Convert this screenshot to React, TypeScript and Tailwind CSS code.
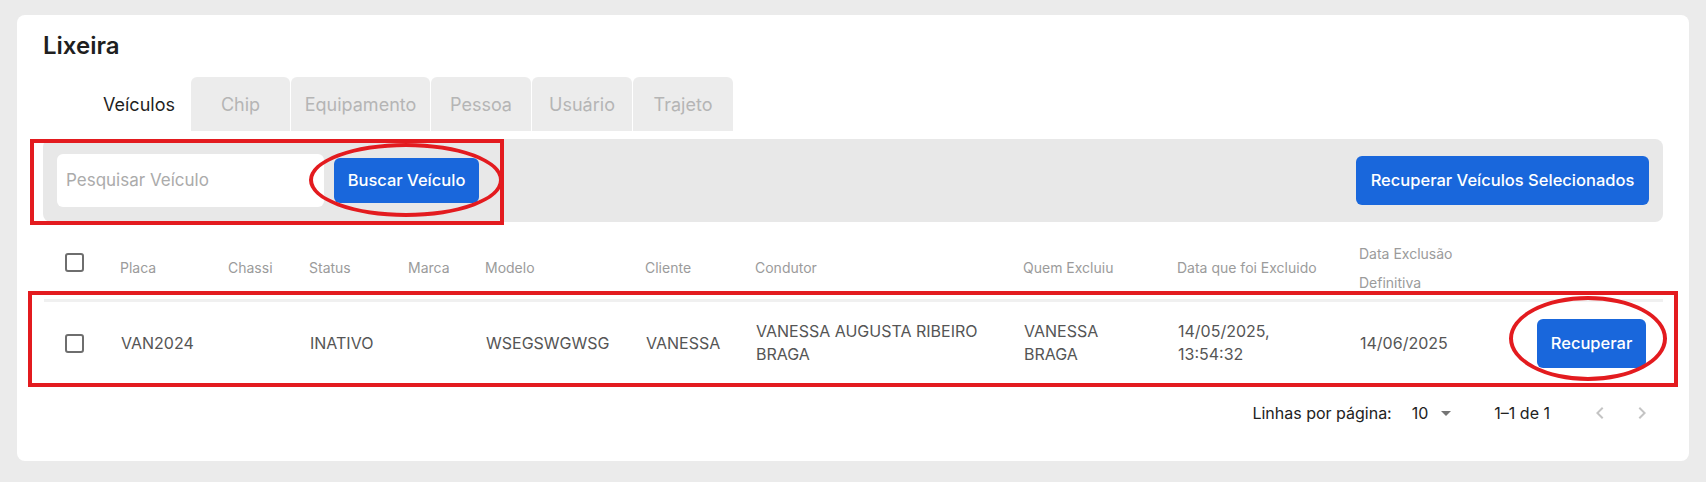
import type { ReactNode } from "react";

const cols =
  "grid grid-cols-[77px_108px_81px_99px_77px_160px_110px_268px_154px_182px_177px_129px]";

const tabs = [
  { label: "Veículos", w: "w-[102px]", active: true },
  { label: "Chip", w: "w-[99px]", active: false },
  { label: "Equipamento", w: "w-[139px]", active: false },
  { label: "Pessoa", w: "w-[100px]", active: false },
  { label: "Usuário", w: "w-[100px]", active: false },
  { label: "Trajeto", w: "w-[100px]", active: false },
];

// largura máxima do texto de cada coluna (para quebrar como na tela original)
const widths = [
  "w-[80px]",
  "w-[60px]",
  "w-[80px]",
  "w-[60px]",
  "w-[130px]",
  "w-[80px]",
  "w-[235px]",
  "w-[100px]",
  "w-[160px]",
  "w-[130px]",
];

const headers = [
  "Placa",
  "Chassi",
  "Status",
  "Marca",
  "Modelo",
  "Cliente",
  "Condutor",
  "Quem Excluiu",
  "Data que foi Excluido",
  "Data Exclusão Definitiva",
];

const row = [
  "VAN2024",
  "",
  "INATIVO",
  "",
  "WSEGSWGWSG",
  "VANESSA",
  "VANESSA AUGUSTA RIBEIRO BRAGA",
  "VANESSA BRAGA",
  "14/05/2025, 13:54:32",
  "14/06/2025",
];

function Checkbox({ className = "" }: { className?: string }) {
  return (
    <div className={`w-[19px] h-[19px] border-2 border-[#6e6e6e] rounded-[3px] ${className}`} />
  );
}

function Cell({ children, w }: { children: ReactNode; w: string }) {
  return <div className={w}>{children}</div>;
}

export default function App() {
  return (
    <div
      className="relative min-h-screen bg-[#ebebeb] pt-[15px] px-[17px]"
      style={{ fontFamily: "Inter, 'Noto Sans', sans-serif" }}
    >
      <div className="bg-white rounded-lg px-[26px] pt-[16px] pb-[19px]">
        <h1 className="text-[24px] leading-[30px] font-semibold text-[#1f1f1f]">Lixeira</h1>

        {/* abas */}
        <div className="flex gap-px ml-[45px] mt-[16px]">
          {tabs.map((t) => (
            <div
              key={t.label}
              className={`${t.w} h-[54px] flex items-center justify-center rounded-t-md text-[18px] ${
                t.active ? "bg-white text-[#1f1f1f]" : "bg-[#ececec] text-[#b5b5b5]"
              }`}
            >
              {t.label}
            </div>
          ))}
        </div>

        {/* barra de busca */}
        <div className="mt-[8px] h-[83px] bg-[#e8e8e8] rounded-lg px-[14px] flex items-center">
          <div className="w-[267px] h-[53px] bg-white rounded-md flex items-center px-[9px] text-[17px] text-[#ababab]">
            Pesquisar Veículo
          </div>
          <button className="ml-[10px] w-[145px] h-[45px] bg-[#1967dc] rounded-md text-white text-[16.5px] font-medium">
            Buscar Veículo
          </button>
          <button className="ml-auto w-[293px] h-[49px] bg-[#1967dc] rounded-md text-white text-[16.5px] font-medium">
            Recuperar Veículos Selecionados
          </button>
        </div>

        {/* tabela */}
        <div className={`${cols} mt-[14px] h-[63px] items-center text-[14px] leading-[29px] text-[#9b9b9b]`}>
          <div className="pl-[22px]">
            <Checkbox className="-mt-[10px]" />
          </div>
          {headers.map((h, i) => (
            <Cell key={h} w={widths[i]}>
              {h}
            </Cell>
          ))}
          <div />
        </div>

        <div
          className={`${cols} ml-px h-[85px] border-t-[3px] border-[#f0f0f0] items-center text-[16px] leading-[23px] text-[#555555]`}
        >
          <div className="pl-[21px]">
            <Checkbox />
          </div>
          {row.map((c, i) => (
            <Cell key={i} w={widths[i]}>
              {c}
            </Cell>
          ))}
          <div>
            <button className="w-[109px] h-[49px] bg-[#1967dc] rounded-md text-white text-[16.5px] font-medium">
              Recuperar
            </button>
          </div>
        </div>

        {/* paginação */}
        <div className="h-[58px] flex items-center justify-end pr-[9px] text-[16px] text-[#222222]">
          <span>Linhas por página:</span>
          <span className="ml-[20px]">10</span>
          <svg viewBox="0 0 24 24" className="ml-[6px] w-6 h-6 fill-[#757575]">
            <path d="M7 10l5 5 5-5z" />
          </svg>
          <span className="ml-[36px]">1–1 de 1</span>
          <svg viewBox="0 0 24 24" className="ml-[38px] w-6 h-6 fill-[#c4c4c4]">
            <path d="M15.41 16.59 10.83 12l4.58-4.59L14 6l-6 6 6 6 1.41-1.41z" />
          </svg>
          <svg viewBox="0 0 24 24" className="ml-[18px] w-6 h-6 fill-[#c4c4c4]">
            <path d="M8.59 16.59 13.17 12 8.59 7.41 10 6l6 6-6 6-1.41-1.41z" />
          </svg>
        </div>
      </div>

      {/* marcações em vermelho */}
      <div className="absolute left-[30px] top-[139px] w-[474px] h-[86px] border-4 border-[#e31b1f] pointer-events-none" />
      <div className="absolute left-[309px] top-[143px] w-[194px] h-[74px] border-4 border-[#e31b1f] rounded-[50%] pointer-events-none" />
      <div className="absolute left-[28px] top-[291px] w-[1650px] h-[96px] border-4 border-[#e31b1f] pointer-events-none" />
      <div className="absolute left-[1509px] top-[296px] w-[158px] h-[85px] border-4 border-[#e31b1f] rounded-[50%] pointer-events-none" />
    </div>
  );
}
